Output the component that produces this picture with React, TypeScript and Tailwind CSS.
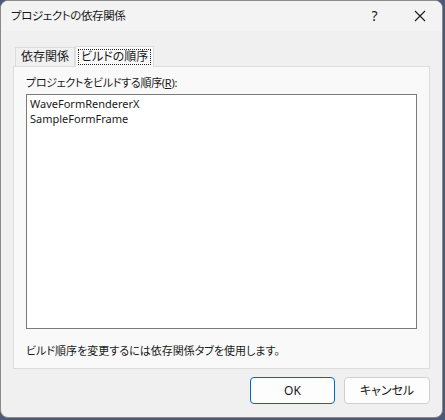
import React from "react";

const font = { fontFamily: '"Noto Sans", "Noto Sans CJK JP", sans-serif', fontFeatureSettings: '"palt"' };

export default function App() {
  return (
    <div className="w-[445px] h-[420px] bg-[#4a5a78] overflow-hidden" style={font}>
      <div className="w-[443px] h-[418px] bg-[#f0f0f0] rounded-[8px] border border-[#8a8a8a] flex flex-col overflow-hidden text-[12px] text-[#1a1a1a]">
        {/* title bar */}
        <div className="h-[30px] bg-[#f3f3f3] flex items-center pl-[10px] shrink-0">
          <span className="text-[11.5px] tracking-[-0.4px] leading-none">プロジェクトの依存関係</span>
          <div className="ml-auto flex items-center">
            <span className="w-[45px] text-center text-[14px] leading-none">?</span>
            <span className="w-[45px] flex justify-center">
              <svg width="12" height="12" viewBox="0 0 12 12">
                <path d="M1 1 L11 11 M11 1 L1 11" stroke="#1a1a1a" strokeWidth="1.1" fill="none" />
              </svg>
            </span>
          </div>
        </div>
        {/* tabs */}
        <div className="px-[12px] pt-[14px] flex flex-col">
          <div className="flex items-end h-[21px] pl-[2px]">
            <div className="h-[19px] px-[5px] border border-b-0 border-[#dcdcdc] bg-[#f0f0f0] flex items-center leading-none">
              依存関係
            </div>
            <div className="h-[21px] -mb-px relative z-10 px-[2px] pt-[2px] border border-b-0 border-[#dcdcdc] bg-[#f9f9f9] flex">
              <span className="border border-dotted border-[#222] px-[2px] h-[16px] flex items-center leading-none">ビルドの順序</span>
            </div>
          </div>
          <div className="border border-[#dcdcdc] bg-[#f9f9f9] px-[12px] pt-[8px] pb-[9px] flex flex-col">
            <div className="leading-[16px] h-[16px] text-[11px] tracking-[-0.3px]">
              プロジェクトをビルドする順序(<span className="underline">R</span>):
            </div>
            <div className="mt-[3px] h-[235px] bg-white border border-[#7a7a7a] px-[3px] pt-[1px] text-[11px] leading-[15px]">
              <div className="h-[15px]">WaveFormRendererX</div>
              <div className="h-[15px]">SampleFormFrame</div>
            </div>
            <div className="mt-[14px] leading-[16px] h-[16px] text-[11px]">ビルド順序を変更するには依存関係タブを使用します。</div>
          </div>
        </div>
        {/* buttons */}
        <div className="flex justify-end gap-[9px] pr-[12px] pt-[8px]">
          <button className="w-[85px] h-[27px] rounded-[4px] border border-[#0067c0] bg-[#fdfdfd] text-[12px]">OK</button>
          <button className="w-[86px] h-[27px] rounded-[4px] border border-[#d0d0d0] bg-[#fdfdfd] text-[12px]">キャンセル</button>
        </div>
      </div>
    </div>
  );
}
